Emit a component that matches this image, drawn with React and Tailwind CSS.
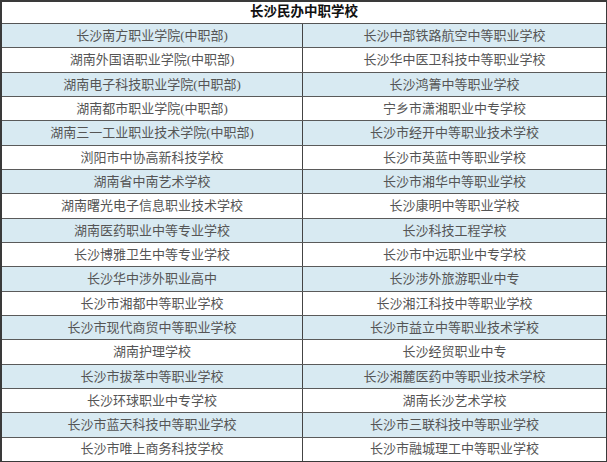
const rows = [
  ["长沙南方职业学院(中职部)", "长沙中部铁路航空中等职业学校"],
  ["湖南外国语职业学院(中职部)", "长沙华中医卫科技中等职业学校"],
  ["湖南电子科技职业学院(中职部)", "长沙鸿箐中等职业学校"],
  ["湖南都市职业学院(中职部)", "宁乡市潇湘职业中专学校"],
  ["湖南三一工业职业技术学院(中职部)", "长沙市经开中等职业技术学校"],
  ["浏阳市中协高新科技学校", "长沙市英蓝中等职业学校"],
  ["湖南省中南艺术学校", "长沙市湘华中等职业学校"],
  ["湖南曙光电子信息职业技术学校", "长沙康明中等职业学校"],
  ["湖南医药职业中等专业学校", "长沙科技工程学校"],
  ["长沙博雅卫生中等专业学校", "长沙市中远职业中专学校"],
  ["长沙华中涉外职业高中", "长沙涉外旅游职业中专"],
  ["长沙市湘都中等职业学校", "长沙湘江科技中等职业学校"],
  ["长沙市现代商贸中等职业学校", "长沙市益立中等职业技术学校"],
  ["湖南护理学校", "长沙经贸职业中专"],
  ["长沙市拔萃中等职业学校", "长沙湘麓医药中等职业技术学校"],
  ["长沙环球职业中专学校", "湖南长沙艺术学校"],
  ["长沙市蓝天科技中等职业学校", "长沙市三联科技中等职业学校"],
  ["长沙市唯上商务科技学校", "长沙市融城理工中等职业学校"],
];

export default function App() {
  return (
    <div
      className="w-[607px] h-[462px] bg-white flex flex-col border-t-2 border-l-2 border-b border-r border-[#3a3a3a] overflow-hidden"
      style={{ fontFamily: '"Liberation Serif", "Noto Sans CJK SC", serif' }}
    >
      <div className="h-[22px] shrink-0 flex items-center justify-center border-b-[1.5px] border-[#555] text-[13.5px] font-bold text-[#111]">
        长沙民办中职学校
      </div>
      {rows.map((r, i) => (
        <div
          key={i}
          className={`flex-1 flex border-b-[1.5px] border-[#5a5a5a] last:border-b-0 ${
            i % 2 === 0 ? "bg-[#d8eaf2]" : "bg-white"
          }`}
        >
          <div className="w-[301px] shrink-0 flex items-center justify-center border-r-[1.5px] border-[#444] text-[13px] text-[#555]">
            {r[0]}
          </div>
          <div className="flex-1 flex items-center justify-center text-[13px] text-[#555]">
            {r[1]}
          </div>
        </div>
      ))}
    </div>
  );
}
